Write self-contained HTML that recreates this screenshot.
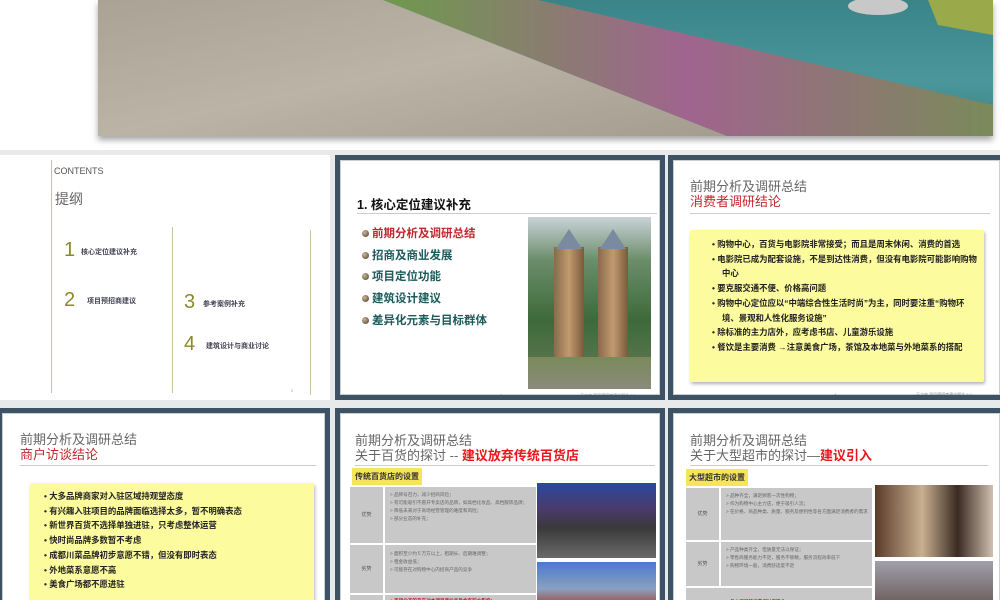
<!DOCTYPE html>
<html><head><meta charset="utf-8"><style>
*{margin:0;padding:0;box-sizing:border-box}
html,body{width:1000px;height:600px;overflow:hidden}
body{background:#e7e9ea;position:relative;font-family:"Liberation Sans","Noto Sans CJK SC",sans-serif}
.abs{position:absolute}
.slide{position:absolute;background:#fff;border:5px solid #3e5265;overflow:hidden}
.slide .in{position:absolute;inset:0;border:1px solid #c9ced3}
.h1{position:absolute;font-size:13px;color:#666;line-height:15px;white-space:nowrap}
.h2{color:#c0282e}
.rule{position:absolute;height:1px;background:#ccc}
.yel{position:absolute;background:#fcfb9e;box-shadow:1px 2px 3px rgba(0,0,0,.3);border-radius:2px}
.yel div{font-size:8.4px;font-weight:bold;color:#222;line-height:14.7px;padding-left:10px;text-indent:-10px}
.foot{position:absolute;font-size:4px;color:#888}
.bul{font-size:11.5px;font-weight:bold;color:#1d5a5a;line-height:21.7px;white-space:nowrap}
.bul span{display:inline-block;width:7px;height:7px;border-radius:50%;background:radial-gradient(circle at 35% 35%,#c8b89a,#4a3a28);margin-right:3px;vertical-align:0}
.tag{position:absolute;background:#f6e55a;font-size:8px;font-weight:bold;color:#333;padding:3px 3px}
.tbl{position:absolute;background:#c8c8c8}
.tbl .r{position:absolute;left:0;right:0;border-top:2px solid #fff}
.tbl .l{position:absolute;left:0;width:35px;text-align:center;font-size:5px;color:#555;border-right:2px solid #fff}
.tbl .t{position:absolute;left:40px;right:3px;font-size:4.6px;color:#666;line-height:8px}
</style></head><body>
<div class="abs" style="left:0;top:0;width:1000px;height:150px;background:#fff"></div>
<div class="abs" style="left:98px;top:0;width:895px;height:136px;box-shadow:0 4px 6px rgba(0,0,0,.35);overflow:hidden;background:linear-gradient(180deg,#3a8488,#4a979b 60%,#3e7e80)">
<svg width="895" height="136" style="position:absolute;left:0;top:0">
<defs><linearGradient id="fl" x1="0" y1="0" x2="1" y2="0"><stop offset="0" stop-color="#6e9a4c"/><stop offset=".5" stop-color="#a0648e"/><stop offset="1" stop-color="#7a8a5a"/></linearGradient>
<linearGradient id="pv" x1="0" y1="0" x2="1" y2="1"><stop offset="0" stop-color="#aaa294"/><stop offset=".5" stop-color="#bbb3a5"/><stop offset="1" stop-color="#a49c8e"/></linearGradient></defs>
<polygon points="285,0 440,0 895,105 895,136 629,136" fill="url(#fl)"/>
<polygon points="0,0 285,0 629,136 0,136" fill="url(#pv)"/>
<polygon points="830,0 895,0 895,35 840,25" fill="#9aaa4a"/>
<ellipse cx="780" cy="6" rx="30" ry="9" fill="#c8c8c8"/>
</svg>
</div>
<!-- slide 1 -->
<div class="abs" style="left:0;top:155px;width:330px;height:245px;background:#fff">
  <div class="abs" style="left:51px;top:5px;width:1px;height:233px;background:#c8c4a0"></div>
  <div class="abs" style="left:172px;top:72px;width:1px;height:166px;background:#c8c4a0"></div>
  <div class="abs" style="left:310px;top:75px;width:1px;height:165px;background:#c8c4a0"></div>
  <div class="abs" style="left:54px;top:11px;font-size:9px;color:#555">CONTENTS</div>
  <div class="abs" style="left:55px;top:34px;font-size:14px;color:#666">提纲</div>
  <div class="abs" style="left:64px;top:84px;font-size:20px;color:#8a8a2a">1</div>
  <div class="abs" style="left:81px;top:92px;font-size:7px;font-weight:bold;color:#445">核心定位建议补充</div>
  <div class="abs" style="left:64px;top:134px;font-size:20px;color:#8a8a2a">2</div>
  <div class="abs" style="left:87px;top:141px;font-size:7px;font-weight:bold;color:#445">项目预招商建议</div>
  <div class="abs" style="left:184px;top:136px;font-size:20px;color:#8a8a2a">3</div>
  <div class="abs" style="left:203px;top:144px;font-size:7px;font-weight:bold;color:#445">参考案例补充</div>
  <div class="abs" style="left:184px;top:178px;font-size:20px;color:#8a8a2a">4</div>
  <div class="abs" style="left:206px;top:186px;font-size:7px;font-weight:bold;color:#445">建筑设计与商业讨论</div>
  <div class="abs" style="left:291px;top:233px;font-size:4px;color:#999">2</div>
</div>
<!-- slide 2 -->
<div class="slide" style="left:335px;top:155px;width:330px;height:245px"><div class="in"></div>
  <div class="abs" style="left:17px;top:34px;font-size:12.5px;font-weight:bold;color:#111">1. 核心定位建议补充</div>
  <div class="rule" style="left:17px;top:53px;width:300px"></div>
  <div class="abs" style="left:22px;top:64px">
    <div class="bul" style="color:#c0282e"><span></span>前期分析及调研总结</div>
    <div class="bul"><span></span>招商及商业发展</div>
    <div class="bul"><span></span>项目定位功能</div>
    <div class="bul"><span></span>建筑设计建议</div>
    <div class="bul"><span></span>差异化元素与目标群体</div>
  </div>
  <div class="abs" style="left:188px;top:57px;width:123px;height:172px;background:linear-gradient(180deg,#c9d3d8 0%,#6c8d6a 25%,#3d6a3a 60%,#6a7a5a 100%);overflow:hidden">
    <div class="abs" style="left:26px;top:30px;width:30px;height:110px;background:linear-gradient(90deg,#8a6a4a,#c09a70,#7a5a3a)"></div>
    <div class="abs" style="left:70px;top:30px;width:30px;height:110px;background:linear-gradient(90deg,#8a6a4a,#c09a70,#7a5a3a)"></div>
    <div class="abs" style="left:28px;top:12px;border:13px solid transparent;border-bottom:20px solid #7a8aa0;border-top:0"></div>
    <div class="abs" style="left:72px;top:12px;border:13px solid transparent;border-bottom:20px solid #7a8aa0;border-top:0"></div>
    <div class="abs" style="left:0;top:140px;width:123px;height:32px;background:linear-gradient(180deg,#7a8a5a,#8a8a7a)"></div>
  </div>
  <div class="foot" style="left:160px;top:233px">3</div>
  <div class="foot" style="left:240px;top:233px">天之府 项目预招商建议报告 3.0</div>
</div>
<!-- slide 3 -->
<div class="slide" style="left:668px;top:155px;width:337px;height:245px"><div class="in"></div>
  <div class="h1" style="left:17px;top:19px">前期分析及调研总结<br><span class="h2">消费者调研结论</span></div>
  <div class="rule" style="left:17px;top:53px;width:300px"></div>
  <div class="yel" style="left:17px;top:70px;width:294px;height:152px;padding:7px 6px 0 22px">
    <div>• 购物中心，百货与电影院非常接受；而且是周末休闲、消费的首选</div>
    <div>• 电影院已成为配套设施，不是到达性消费，但没有电影院可能影响购物中心</div>
    <div>• 要克服交通不便、价格高问题</div>
    <div>• 购物中心定位应以“中端综合性生活时尚”为主，同时要注重“购物环境、景观和人性化服务设施”</div>
    <div>• 除标准的主力店外，应考虑书店、儿童游乐设施</div>
    <div>• 餐饮是主要消费 →注意美食广场，茶馆及本地菜与外地菜系的搭配</div>
  </div>
  <div class="foot" style="left:161px;top:232px">4</div>
  <div class="foot" style="left:243px;top:232px">天之府 项目预招商建议报告 3.0</div>
</div>
<!-- row 3 A -->
<div class="slide" style="left:-3px;top:408px;width:333px;height:200px"><div class="in"></div>
  <div class="h1" style="left:18px;top:19px">前期分析及调研总结<br><span class="h2">商户访谈结论</span></div>
  <div class="rule" style="left:18px;top:52px;width:296px"></div>
  <div class="yel" style="left:28px;top:70px;width:284px;height:130px;padding:6px 8px 0 14px">
    <div>• 大多品牌商家对入驻区域持观望态度</div>
    <div>• 有兴趣入驻项目的品牌面临选择太多，暂不明确表态</div>
    <div>• 新世界百货不选择单独进驻，只考虑整体运营</div>
    <div>• 快时尚品牌多数暂不考虑</div>
    <div>• 成都川菜品牌初步意愿不错，但没有即时表态</div>
    <div>• 外地菜系意愿不高</div>
    <div>• 美食广场都不愿进驻</div>
  </div>
</div>
<!-- slide B -->
<div class="slide" style="left:335px;top:408px;width:330px;height:200px"><div class="in"></div>
  <div class="h1" style="left:15px;top:20px">前期分析及调研总结<br>关于百货的探讨 -- <b style="color:#e8161c">建议放弃传统百货店</b></div>
  <div class="rule" style="left:15px;top:52px;width:300px"></div>
  <div class="tag" style="left:12px;top:55px">传统百货店的设置</div>
  <div class="tbl" style="left:10px;top:74px;width:186px;height:126px">
    <div class="l" style="top:0;height:56px;line-height:56px">优势</div>
    <div class="t" style="top:4px">&gt; 品牌号召力，减少招商风险；<br>&gt; 有可能吸引不愿开专卖店的品牌，如高档化妆品、高档服饰品牌；<br>&gt; 降低未来对于商场经营管理的难度和风险；<br>&gt; 部分业态的补充；</div>
    <div class="r" style="top:56px"></div>
    <div class="l" style="top:58px;height:48px;line-height:48px">劣势</div>
    <div class="t" style="top:63px">&gt; 面积至少约５万方以上，租期长、后期难调整；<br>&gt; 租金收益低；<br>&gt; 可能存在对购物中心内招商产品的竞争</div>
    <div class="r" style="top:106px"></div>
    <div class="l" style="top:108px;height:20px"></div>
    <div class="t" style="top:110px;color:#d01010;font-weight:bold">● 百货业态的存在对本项目商业品质会有较大影响；</div>
  </div>
  <div class="abs" style="left:197px;top:70px;width:119px;height:75px;background:linear-gradient(180deg,#2a4aa0 0%,#4a3a6a 35%,#3a3a3a 60%,#6a6a6a 100%)"></div>
  <div class="abs" style="left:197px;top:149px;width:119px;height:45px;background:linear-gradient(180deg,#4a7ad0,#8aa0c0 60%,#a04030)"></div>
</div>
<!-- slide C -->
<div class="slide" style="left:668px;top:408px;width:337px;height:200px"><div class="in"></div>
  <div class="h1" style="left:17px;top:20px">前期分析及调研总结<br>关于大型超市的探讨—<b style="color:#e8161c">建议引入</b></div>
  <div class="rule" style="left:17px;top:52px;width:298px"></div>
  <div class="tag" style="left:13px;top:56px">大型超市的设置</div>
  <div class="tbl" style="left:13px;top:75px;width:186px;height:125px">
    <div class="l" style="top:0;height:52px;line-height:52px">优势</div>
    <div class="t" style="top:4px">&gt; 品种齐全，满足顾客一次性购物；<br>&gt; 作为购物中心主力店，便于吸引人流；<br>&gt; 在价格、商品种类、质量、服务及便利性等各方面满足消费者的需求</div>
    <div class="r" style="top:52px"></div>
    <div class="l" style="top:54px;height:44px;line-height:44px">劣势</div>
    <div class="t" style="top:58px">&gt; 产品种类齐全，但质量无法以保证；<br>&gt; 零售商服务能力不足，服务不够精，服务流程效率低下<br>&gt; 购物环境一般，消费舒适度不足</div>
    <div class="r" style="top:98px"></div>
    <div class="t" style="top:110px;color:#d01010;font-weight:bold">● 与本项目的消费相对应符合</div>
  </div>
  <div class="abs" style="left:202px;top:72px;width:118px;height:72px;background:linear-gradient(90deg,#5a3a2a,#c8b090 40%,#3a2a22 70%,#d0c0b0)"></div>
  <div class="abs" style="left:202px;top:148px;width:118px;height:45px;background:linear-gradient(180deg,#a0a0a8,#6a5a5a)"></div>
</div>
</body></html>
